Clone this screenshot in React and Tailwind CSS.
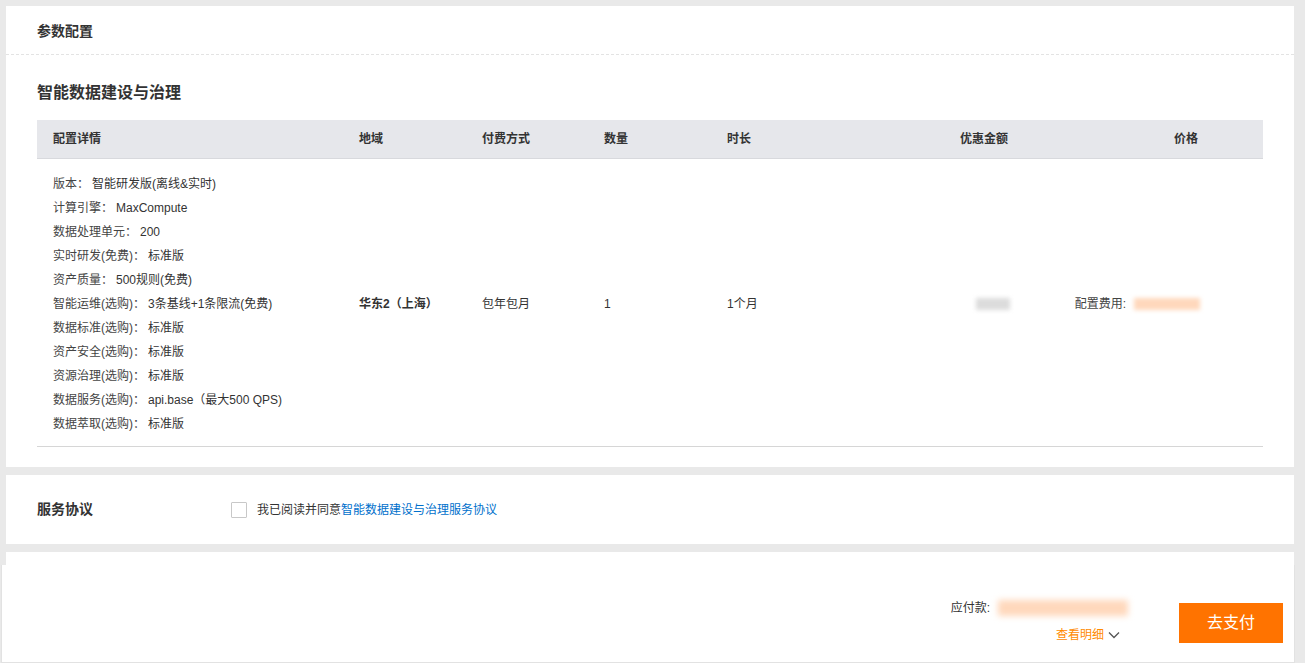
import React from "react";

const FONT = { fontFamily: '"Liberation Sans", "Noto Sans CJK SC", sans-serif' };

const details = [
  ["版本：", "智能研发版(离线&实时)"],
  ["计算引擎：", "MaxCompute"],
  ["数据处理单元：", "200"],
  ["实时研发(免费)：", "标准版"],
  ["资产质量：", "500规则(免费)"],
  ["智能运维(选购)：", "3条基线+1条限流(免费)"],
  ["数据标准(选购)：", "标准版"],
  ["资产安全(选购)：", "标准版"],
  ["资源治理(选购)：", "标准版"],
  ["数据服务(选购)：", "api.base（最大500 QPS)"],
  ["数据萃取(选购)：", "标准版"],
];

const cols = "grid grid-cols-[306px_123px_122px_123px_194px_120px_238px]";

export default function App() {
  return (
    <div className="w-[1305px] h-[663px] flex flex-col overflow-hidden bg-[#e9e9e9] text-[#333]" style={FONT}>
      <div className="flex-1 overflow-hidden pl-[6px] pr-[11px] pt-[6px] flex flex-col gap-[8px]">
        {/* 参数配置 card */}
        <div className="bg-white shrink-0 h-[461px] flex flex-col">
          <div className="h-[49px] flex items-center px-[31px] pt-[2px] border-b border-dashed border-[#e3e3e3]">
            <span className="text-[14px] font-bold text-[#333]">参数配置</span>
          </div>
          <div className="px-[31px] pt-[27px]">
            <div className="text-[16px] leading-[22px] font-bold text-[#333] mb-[16px]">智能数据建设与治理</div>
            <div className={`${cols} h-[39px] items-center bg-[#e6e7eb] border-b border-[#d8d9dd] text-[12px] font-bold text-[#333]`}>
              <div className="pl-[16px]">配置详情</div>
              <div className="pl-[16px]">地域</div>
              <div className="pl-[16px]">付费方式</div>
              <div className="pl-[16px]">数量</div>
              <div className="pl-[16px]">时长</div>
              <div className="text-right pr-[17px]">优惠金额</div>
              <div className="text-right pr-[65px]">价格</div>
            </div>
            <div className={`${cols} items-center border-b border-[#d6d6d6] text-[12px] pt-[13px] pb-[10px]`}>
              <div className="pl-[16px] flex flex-col">
                {details.map(([k, v]) => (
                  <div key={k} className="h-[24px] leading-[24px] whitespace-nowrap">
                    <span className="text-[#444]">{k}</span>
                    <span className="text-[#333] ml-[3px]">{v}</span>
                  </div>
                ))}
              </div>
              <div className="pl-[16px] font-bold text-[#333]">华东2（上海）</div>
              <div className="pl-[16px]">包年包月</div>
              <div className="pl-[16px]">1</div>
              <div className="pl-[16px]">1个月</div>
              <div className="flex justify-end pr-[15px]">
                <div className="w-[34px] h-[12px] bg-[#dcdcdc] blur-[2px]" />
              </div>
              <div className="flex justify-end items-center pr-[63px]">
                <span className="text-[#444] mr-[8px]">配置费用:</span>
                <div className="w-[66px] h-[12px] bg-[#ffd8bc] blur-[2px]" />
              </div>
            </div>
          </div>
        </div>

        {/* 服务协议 card */}
        <div className="bg-white shrink-0 h-[69px] flex items-center px-[31px]">
          <span className="text-[14px] font-bold text-[#333] w-[194px]">服务协议</span>
          <div className="w-[16px] h-[16px] border border-[#c8c8c8] bg-white rounded-[1px] mr-[10px]" />
          <span className="text-[12px] text-[#333]">我已阅读并同意</span>
          <span className="text-[12px] text-[#0070cc]">智能数据建设与治理服务协议</span>
        </div>

        {/* next card (cut off) */}
        <div className="bg-white shrink-0 h-[200px]" />
      </div>

      {/* footer */}
      <div className="h-[98px] shrink-0 bg-white border-l border-r border-b border-[#e2e2e2] ml-[1px] mr-[10px] flex justify-end items-start pt-[38px] pr-[11px]">
        <div className="flex flex-col items-end mr-[51px] mt-[-5px]">
          <div className="flex items-center h-[20px]">
            <span className="text-[12px] text-[#333] mr-[8px]">应付款:</span>
            <div className="w-[130px] h-[16px] bg-[#ffd8bc] blur-[3px]" />
          </div>
          <div className="flex items-center h-[20px] mt-[7px] mr-[8px]">
            <span className="text-[12px] text-[#ff8a00]">查看明细</span>
            <svg width="12" height="8" viewBox="0 0 12 8" className="ml-[4px]">
              <path d="M1 1.5 L6 6.5 L11 1.5" fill="none" stroke="#555" strokeWidth="1.3" />
            </svg>
          </div>
        </div>
        <button className="w-[104px] h-[40px] bg-[#ff7300] text-white text-[16px] flex items-center justify-center">去支付</button>
      </div>
    </div>
  );
}
